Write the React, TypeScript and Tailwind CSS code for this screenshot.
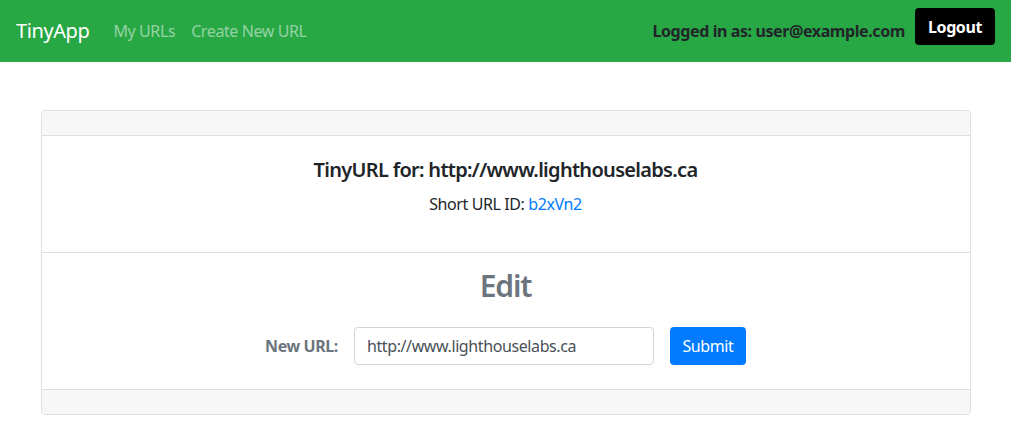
const font = { fontFamily: '"Noto Sans", "Open Sans", sans-serif' }

export default function App() {
  return (
    <div className="min-h-screen bg-white tracking-[-0.025em] text-[#212529]" style={font}>
      {/* Navbar */}
      <nav className="flex h-[62px] items-center justify-between bg-[#28a745] px-4">
        <div className="flex items-center">
          <span className="mr-4 text-[20px] text-white">TinyApp</span>
          <a className="px-2 text-[16px] text-white/50">My URLs</a>
          <a className="px-2 text-[16px] text-white/50">Create New URL</a>
        </div>
        <div className="flex items-center self-start pt-2">
          <span className="mt-[9px] mr-[10px] text-[16px] font-bold text-[#212529]">
            Logged in as: user@example.com
          </span>
          <button className="h-[37px] w-[80px] rounded bg-black text-[16px] font-bold text-white">
            Logout
          </button>
        </div>
      </nav>

      {/* Card */}
      <div className="mx-auto mt-12 w-[930px]">
        <div className="overflow-hidden rounded border border-[#dfdfdf]">
          <div className="h-[25px] border-b border-[#dfdfdf] bg-[#f7f7f7]" />

          <div className="px-5 pt-[22px] pb-5 text-center">
            <h3 className="mb-[10px] text-[20px] leading-[24px] font-semibold tracking-[-0.035em]">
              TinyURL for: http://www.lighthouselabs.ca
            </h3>
            <p className="mb-4 text-[16px] leading-6">
              Short URL ID: <a className="text-[#007bff]">b2xVn2</a>
            </p>
          </div>

          <div className="border-t border-[#dfdfdf] pt-[14px] pb-6 text-center">
            <h2 className="mb-[22px] text-[30px] leading-[38px] font-semibold tracking-[-0.04em] text-[#6c757d]">
              Edit
            </h2>
            <form className="flex items-center justify-center gap-4">
              <label className="text-[16px] font-bold text-[#6c757d]">New URL:</label>
              <input
                className="h-[38px] w-[300px] rounded border border-[#ced4da] px-3 text-[16px] tracking-[-0.025em] text-[#495057]"
                defaultValue="http://www.lighthouselabs.ca"
              />
              <button
                type="button"
                className="h-[38px] w-[76px] rounded bg-[#007bff] text-[16px] tracking-[-0.025em] text-white"
              >
                Submit
              </button>
            </form>
          </div>

          <div className="h-[25px] border-t border-[#dfdfdf] bg-[#f7f7f7]" />
        </div>
      </div>
    </div>
  )
}
